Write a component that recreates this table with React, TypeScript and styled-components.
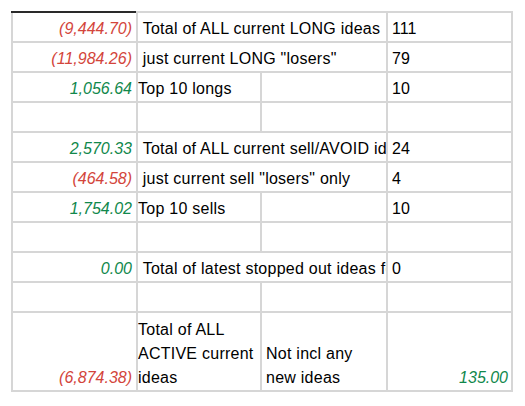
import React from "react";
import styled, { createGlobalStyle } from "styled-components";

const Global = createGlobalStyle`
  html, body { margin: 0; padding: 0; background: #ffffff; }
  body { font-family: "Liberation Sans", Arial, sans-serif; }
`;

const Page = styled.div`
  padding: 11px 0 0 11px;
`;

const Sheet = styled.table`
  border-collapse: collapse;
  table-layout: fixed;
  width: 500px;
  font-family: "Liberation Sans", Arial, sans-serif;
  font-size: 16px;
  line-height: 24px;
  color: #000;
`;

const Col = styled.col<{ $w: number }>`
  width: ${(p) => p.$w}px;
`;

type Tone = "neg" | "pos";

const toneColor = (t?: Tone) => (t === "neg" ? "#d3453b" : t === "pos" ? "#11884c" : "#000");

const BaseCell = styled.td<{ $tall?: boolean; $first?: boolean }>`
  border: 2px solid #d6d6d6;
  ${(p) => (p.$first ? "border-top-color: #2a2a2a;" : "")}
  vertical-align: bottom;
  overflow: hidden;
  padding-top: ${(p) => (p.$tall ? 5 : 4)}px;
  padding-bottom: 0;
`;

const NumCell = styled(BaseCell)<{ $tone?: Tone }>`
  text-align: right;
  font-style: italic;
  white-space: nowrap;
  color: ${(p) => toneColor(p.$tone)};
  padding-left: 3px;
  padding-right: 4px;
`;

const LabelCell = styled(BaseCell)<{ $wrap?: boolean }>`
  text-align: left;
  letter-spacing: 0.25px;
  white-space: ${(p) => (p.$wrap ? "normal" : "nowrap")};
  padding-left: 0;
  padding-right: 0;
`;

const NoteCell = styled(BaseCell)`
  text-align: left;
  letter-spacing: 0.25px;
  white-space: normal;
  padding-left: 4px;
  padding-right: 8px;
`;

const CountCell = styled(BaseCell)<{ $tone?: Tone }>`
  text-align: ${(p) => (p.$tone ? "right" : "left")};
  font-style: ${(p) => (p.$tone ? "italic" : "normal")};
  color: ${(p) => toneColor(p.$tone)};
  white-space: nowrap;
  padding-left: 4px;
  padding-right: 3px;
`;

type Row =
  | { kind: "span"; num: string; tone: Tone; label: string; count: string }
  | { kind: "split"; num: string; tone: Tone; label: string; count: string }
  | { kind: "empty" };

const rows: Row[] = [
  { kind: "span", num: "(9,444.70)", tone: "neg", label: "\u00a0Total of ALL current LONG ideas", count: "111" },
  { kind: "span", num: "(11,984.26)", tone: "neg", label: "\u00a0just current LONG \"losers\"", count: "79" },
  { kind: "split", num: "1,056.64", tone: "pos", label: "Top 10 longs", count: "10" },
  { kind: "empty" },
  { kind: "span", num: "2,570.33", tone: "pos", label: "\u00a0Total of ALL current sell/AVOID ideas", count: "24" },
  { kind: "span", num: "(464.58)", tone: "neg", label: "\u00a0just current sell \"losers\" only", count: "4" },
  { kind: "split", num: "1,754.02", tone: "pos", label: "Top 10 sells", count: "10" },
  { kind: "empty" },
  { kind: "span", num: "0.00", tone: "pos", label: "\u00a0Total of latest stopped out ideas for", count: "0" },
  { kind: "empty" },
];

export default function App() {
  return (
    <>
      <Global />
      <Page>
        <Sheet>
          <colgroup>
            <Col $w={125} />
            <Col $w={124} />
            <Col $w={126} />
            <Col $w={125} />
          </colgroup>
          <tbody>
            {rows.map((r, i) => {
              const first = i === 0;
              if (r.kind === "empty") {
                return (
                  <tr key={i}>
                    <NumCell $first={first}>&nbsp;</NumCell>
                    <LabelCell />
                    <NoteCell />
                    <CountCell />
                  </tr>
                );
              }
              if (r.kind === "span") {
                return (
                  <tr key={i}>
                    <NumCell $first={first} $tone={r.tone}>{r.num}</NumCell>
                    <LabelCell colSpan={2}>{r.label}</LabelCell>
                    <CountCell>{r.count}</CountCell>
                  </tr>
                );
              }
              return (
                <tr key={i}>
                  <NumCell $first={first} $tone={r.tone}>{r.num}</NumCell>
                  <LabelCell>{r.label}</LabelCell>
                  <NoteCell />
                  <CountCell>{r.count}</CountCell>
                </tr>
              );
            })}
            <tr>
              <NumCell $tall $tone="neg">(6,874.38)</NumCell>
              <LabelCell $tall $wrap>Total of ALL ACTIVE current ideas</LabelCell>
              <NoteCell $tall>Not incl any new ideas</NoteCell>
              <CountCell $tall $tone="pos">135.00</CountCell>
            </tr>
          </tbody>
        </Sheet>
      </Page>
    </>
  );
}
